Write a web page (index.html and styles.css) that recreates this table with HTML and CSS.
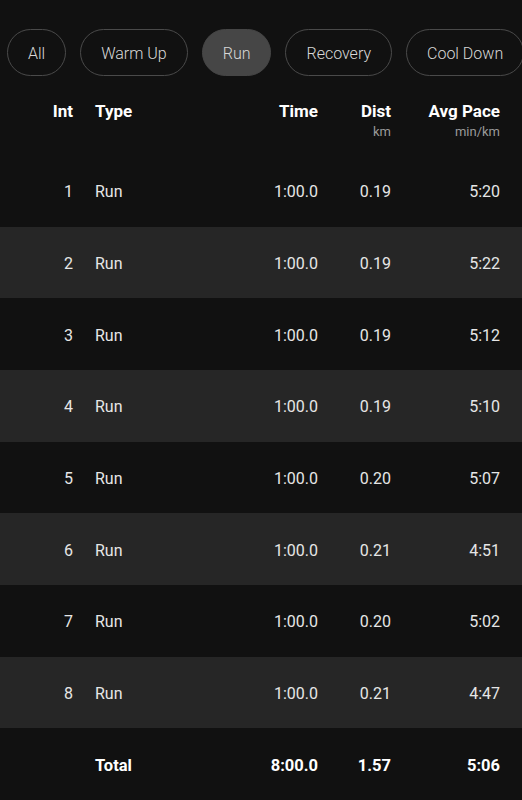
FILE: index.html
```html
<!DOCTYPE html>
<html>
<head>
<meta charset="utf-8">
<link rel="stylesheet" href="styles.css">
</head>
<body>
<div class="chips">
  <div class="chip">All</div>
  <div class="chip">Warm Up</div>
  <div class="chip active">Run</div>
  <div class="chip">Recovery</div>
  <div class="chip">Cool Down</div>
</div>
<div class="table">
  <div class="row head">
    <div class="c int">Int</div>
    <div class="c type">Type</div>
    <div class="c num">Time</div>
    <div class="c num">Dist<span class="unit">km</span></div>
    <div class="c num">Avg Pace<span class="unit">min/km</span></div>
  </div>
  <div class="row"><div class="c int">1</div><div class="c type">Run</div><div class="c num">1:00.0</div><div class="c num">0.19</div><div class="c num">5:20</div></div>
  <div class="row alt"><div class="c int">2</div><div class="c type">Run</div><div class="c num">1:00.0</div><div class="c num">0.19</div><div class="c num">5:22</div></div>
  <div class="row"><div class="c int">3</div><div class="c type">Run</div><div class="c num">1:00.0</div><div class="c num">0.19</div><div class="c num">5:12</div></div>
  <div class="row alt"><div class="c int">4</div><div class="c type">Run</div><div class="c num">1:00.0</div><div class="c num">0.19</div><div class="c num">5:10</div></div>
  <div class="row"><div class="c int">5</div><div class="c type">Run</div><div class="c num">1:00.0</div><div class="c num">0.20</div><div class="c num">5:07</div></div>
  <div class="row alt"><div class="c int">6</div><div class="c type">Run</div><div class="c num">1:00.0</div><div class="c num">0.21</div><div class="c num">4:51</div></div>
  <div class="row"><div class="c int">7</div><div class="c type">Run</div><div class="c num">1:00.0</div><div class="c num">0.20</div><div class="c num">5:02</div></div>
  <div class="row alt"><div class="c int">8</div><div class="c type">Run</div><div class="c num">1:00.0</div><div class="c num">0.21</div><div class="c num">4:47</div></div>
  <div class="row total"><div class="c int"></div><div class="c type">Total</div><div class="c num">8:00.0</div><div class="c num">1.57</div><div class="c num">5:06</div></div>
</div>
</body>
</html>
```
FILE: styles.css
```css
html, body {
  margin: 0;
  padding: 0;
  background: #111111;
  font-family: Roboto, "Liberation Sans", sans-serif;
  color: #e6e6e6;
  overflow: hidden;
}
.chips {
  display: flex;
  gap: 14px;
  padding: 29px 0 0 7px;
  white-space: nowrap;
  overflow: hidden;
}
.chip {
  flex: none;
  box-sizing: border-box;
  height: 47px;
  padding: 2px 20px 0;
  border: 1px solid #4a4a4a;
  border-radius: 24px;
  display: flex;
  align-items: center;
  font-size: 16px;
  font-weight: 300;
  color: #d8d8d8;
}
.chip.active {
  background: #464646;
  border-color: #464646;
}
.table {
  display: flex;
  flex-direction: column;
}
.row {
  display: grid;
  grid-template-columns: 73px 1fr 80px 73px 109px;
  padding-right: 22px;
  padding-top: 3px;
  box-sizing: border-box;
  height: 71.67px;
  align-items: center;
  font-size: 16px;
  line-height: 20px;
}
.row.alt {
  background: #262626;
}
.row .type {
  padding-left: 22px;
}
.row .int, .row .num {
  text-align: right;
}
.row.head {
  height: 79px;
  padding-top: 25px;
  align-items: start;
  font-size: 17px;
  font-weight: 700;
  color: #ffffff;
}
.unit {
  display: block;
  margin-top: 3px;
  font-size: 13px;
  line-height: 16px;
  font-weight: 400;
  color: #9a9a9a;
}
.row.total {
  height: 72px;
  font-weight: 700;
  font-size: 16.5px;
  color: #ffffff;
}
```
